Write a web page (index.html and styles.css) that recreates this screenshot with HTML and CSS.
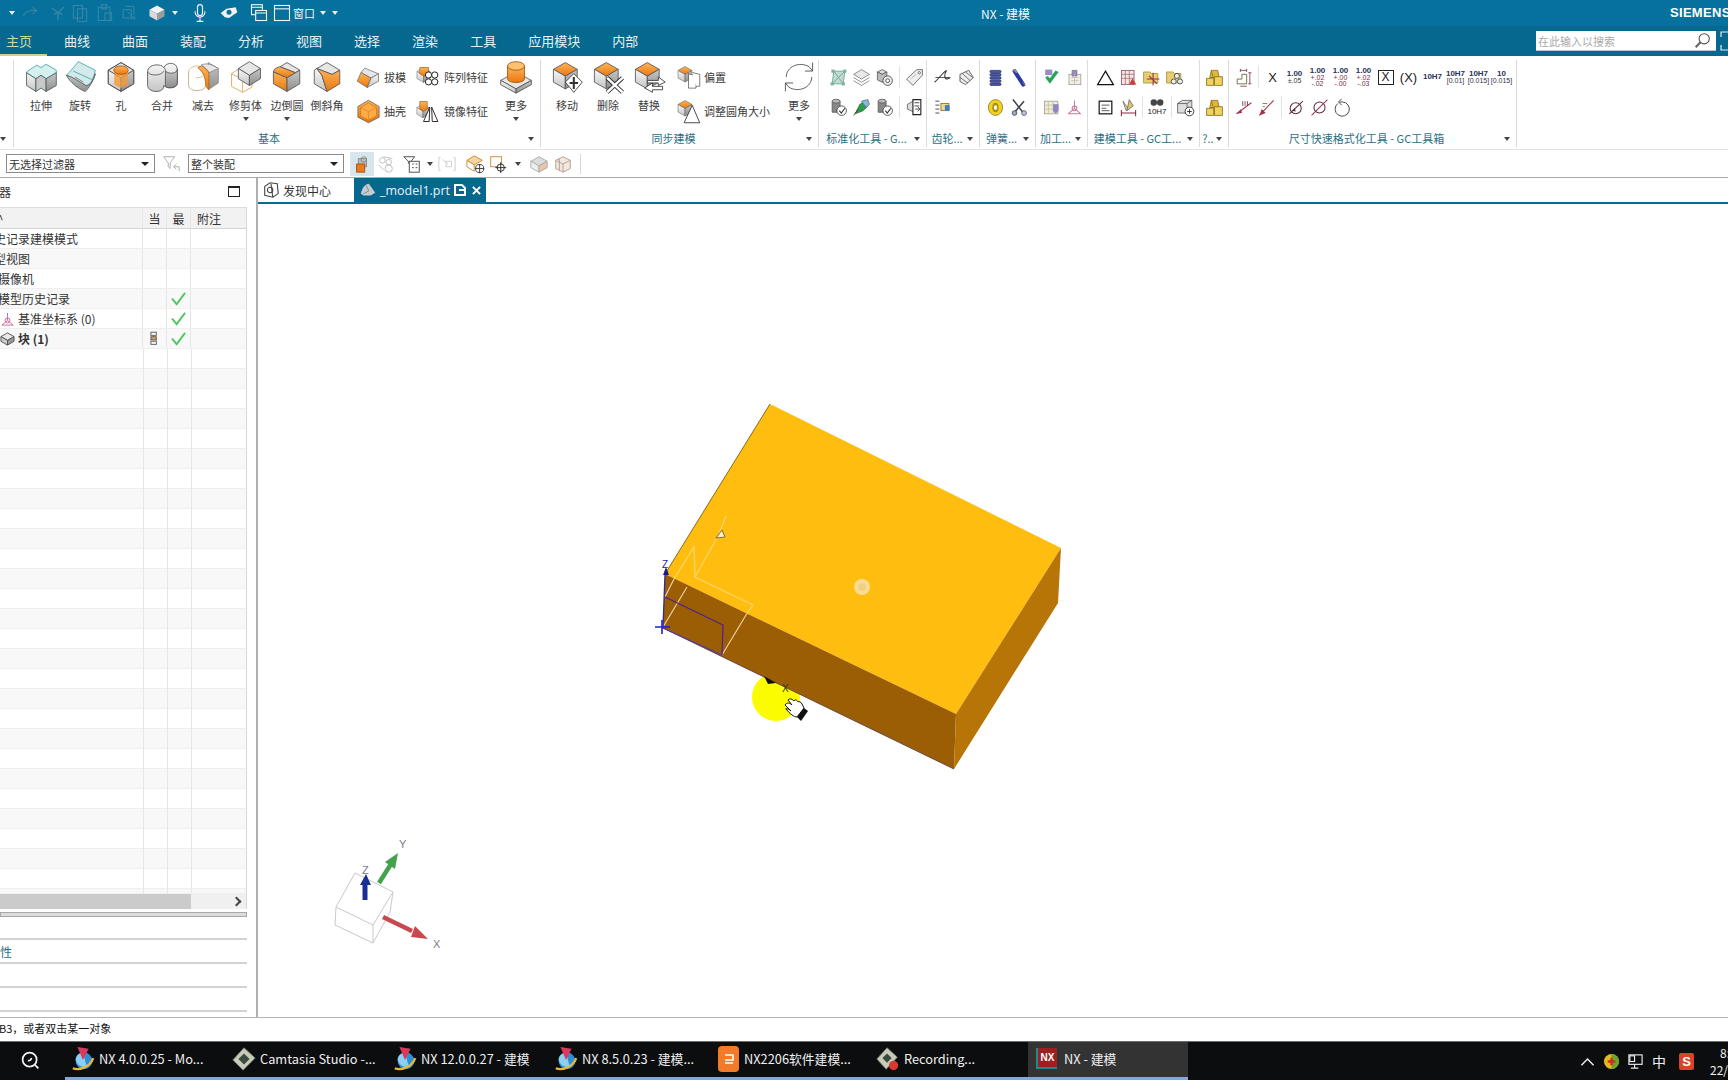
FILE: index.html
```html
<!DOCTYPE html>
<html lang="zh">
<head>
<meta charset="utf-8">
<title>NX - 建模</title>
<link rel="stylesheet" href="styles.css">
</head>
<body>
<svg class="defs" aria-hidden="true">
<defs>
<linearGradient id="o" x1="0" y1="0" x2="0" y2="1"><stop offset="0" stop-color="#ffb45a"/><stop offset="1" stop-color="#e8780f"/></linearGradient>
<linearGradient id="l" x1="0" y1="0" x2="0" y2="1"><stop offset="0" stop-color="#f7f7f7"/><stop offset="1" stop-color="#c4c4c4"/></linearGradient>
<linearGradient id="r" x1="0" y1="0" x2="0" y2="1"><stop offset="0" stop-color="#c8c8c8"/><stop offset="1" stop-color="#8e8e8e"/></linearGradient>
<symbol id="cube" viewBox="0 0 40 40"><g stroke="#555" stroke-linejoin="round"><path d="M20 3 35 12 20 21 5 12z" fill="#e6e6e6"/><path d="M5 12 20 21V37L5 28z" fill="url(#l)"/><path d="M35 12 20 21V37L35 28z" fill="url(#r)"/></g></symbol>
<symbol id="ocube" viewBox="0 0 40 40"><g stroke="#555" stroke-linejoin="round"><path d="M18 3 32 11 18 19 4 11z" fill="url(#o)"/><path d="M4 11 18 19V34L4 26z" fill="url(#l)"/><path d="M32 11 18 19V34L32 26z" fill="url(#r)"/></g></symbol>
<symbol id="extrude" viewBox="0 0 40 40"><g stroke="#4a5a5a" stroke-linejoin="round"><path d="M3 14 15 6 20 9 26 5 38 12 38 15 26 22 20 18 14 22 3 15z" fill="#d6f0f0" stroke="#3aa9ad"/><path d="M3 15 14 22V37L3 30z" fill="url(#l)"/><path d="M14 22 20 18 26 22V37L20 33 14 37z" fill="#c9c9c9"/><path d="M26 22 38 15V30L26 37z" fill="url(#r)"/></g></symbol>
<symbol id="revolve" viewBox="0 0 40 40"><g stroke="#4d5a5d" stroke-linejoin="round"><path d="M4 18C10 20 18 26 26 35 32 30 36 22 38 12L18 2C14 7 8 14 4 18z" fill="#d4eaea" stroke="#3aa9ad"/><path d="M4 18C8 26 18 34 26 37 30 34 35 26 38 16 37 22 32 30 27 30 20 26 12 20 4 18z" fill="url(#r)"/><path d="M12 13 34 23" stroke="#3aa9ad" fill="none"/><path d="M14 20 24 26" stroke="#777" fill="none"/></g></symbol>
<symbol id="hole" viewBox="0 0 40 40"><use href="#cube"/><path d="M12 12V29L20 33 28 29V12z" fill="#f09a3a" opacity=".8"/><ellipse cx="20" cy="12" rx="8.500" ry="5" fill="url(#o)" stroke="#a15a10"/><path d="M20 3 35 12V28L20 37 5 28V12z" fill="none" stroke="#555"/></symbol>
<symbol id="unite" viewBox="0 0 40 40"><g stroke="#555"><path d="M3 14C3 4 20 4 22 9 26 1 38 3 38 11V27C38 34 26 34 22 30V32C20 40 3 38 3 30z" fill="url(#l)"/><path d="M24 13C28 17 38 16 38 11V27C38 33 26 34 24 31z" fill="url(#r)"/><path d="M22 9C24 10 24 12 24 13M3 14C5 19 20 19 22 13" fill="none"/></g></symbol>
<symbol id="subtract" viewBox="0 0 40 40"><g stroke="#888"><ellipse cx="13" cy="14" rx="10" ry="7" fill="#fff" stroke="#d8b48a"/><path d="M3 14V30C3 38 23 38 23 30" fill="#fff" stroke="#c8a478"/><path d="M26 3 38 10V27L26 35V16z" fill="url(#r)"/><path d="M18 6C24 3 30 5 38 10L27 15C26 12 22 8 18 6z" fill="#e8e8e8"/><path d="M18 7C24 10 27 14 27 17V35C25 33 23 31 23 28 23 20 20 14 14 9z" fill="url(#o)" stroke="#b36410"/></g></symbol>
<symbol id="trim" viewBox="0 0 40 40"><g fill="none" stroke="#e0a050"><path d="M3 16 14 9 27 17 27 32 16 38 3 31z" fill="#fff"/><path d="M3 16 16 23 27 17M16 23V38"/></g><g stroke="#555"><path d="M24 2 37 10 24 18 11 10z" fill="#e6e6e6"/><path d="M11 10 24 18V30L11 22z" fill="url(#l)"/><path d="M37 10 24 18V30L37 22z" fill="url(#r)"/></g></symbol>
<symbol id="blend" viewBox="0 0 40 40"><g stroke="#555" stroke-linejoin="round"><path d="M20 3 35 12 30 15 12 8z" fill="#e6e6e6"/><path d="M12 8 30 15 20 21 4 14C4 11 9 8 12 8z" fill="url(#o)"/><path d="M4 14 20 21V37L4 28z" fill="url(#o)"/><path d="M35 12 20 21V37L35 28z" fill="url(#r)"/></g></symbol>
<symbol id="chamfer" viewBox="0 0 40 40"><g stroke="#555" stroke-linejoin="round"><path d="M20 3 35 12 26 17 8 10z" fill="#e6e6e6"/><path d="M5 12 8 10 14 18 20 37 5 28z" fill="url(#l)"/><path d="M8 10 26 17 35 12V28L20 37 14 18z" fill="url(#o)"/></g></symbol>
<symbol id="draft" viewBox="0 0 40 40"><g stroke="#555" stroke-linejoin="round"><path d="M14 5 36 14 24 21 8 12z" fill="#e6e6e6"/><path d="M8 12 24 21 18 36 2 26z" fill="url(#o)"/><path d="M36 14 24 21 18 36 36 26z" fill="url(#l)"/></g></symbol>
<symbol id="shell" viewBox="0 0 40 40"><g stroke="#444"><path d="M20 2 37 12V29L20 38 3 29V12z" fill="url(#o)"/><path d="M20 6 33 14V27L20 34 7 27V14z" fill="#ffab45" stroke="#b56a1c"/><path d="M7 14 20 20 33 14M20 20V34" stroke="#d0801f" fill="none"/></g></symbol>
<symbol id="pattern" viewBox="0 0 40 40"><use href="#cube" x="-2" y="2" width="28" height="28"/><path d="M6 4h14v10l-7 4-7-4z" fill="url(#o)" stroke="#9a5a12"/><g fill="#fff" stroke="#222" stroke-width="1.600"><circle cx="20" cy="16" r="5"/><circle cx="30" cy="16" r="5"/><circle cx="20" cy="27" r="5"/><circle cx="30" cy="27" r="5"/></g></symbol>
<symbol id="mirror" viewBox="0 0 40 40"><use href="#cube" x="-2" y="6" width="26" height="26"/><path d="M6 4h12v12l-6 4-6-4z" fill="url(#o)" stroke="#9a5a12"/><g fill="#fff" stroke="#222" stroke-width="1.500"><path d="M22 13 12 36H21z"/><path d="M25 13 35 36H26z"/></g></symbol>
<symbol id="boss" viewBox="0 0 40 40"><path d="M20 14 38 24 20 34 2 24z" fill="#e6e6e6" stroke="#555"/><path d="M2 24 20 34V39L2 29z" fill="url(#l)" stroke="#555"/><path d="M38 24 20 34V39L38 29z" fill="url(#r)" stroke="#555"/><path d="M10 7V22C10 28 30 28 30 22V7z" fill="url(#o)" stroke="#9a5a12"/><ellipse cx="20" cy="7" rx="10" ry="5" fill="#ffc070" stroke="#9a5a12"/></symbol>
<symbol id="move" viewBox="0 0 40 40"><use href="#ocube"/><path d="M28 16 38 26 28 38 18 26z" fill="#fff" stroke="#333"/><path d="M28 20V34M23 27H33" stroke="#333" stroke-width="2.400"/></symbol>
<symbol id="del" viewBox="0 0 40 40"><use href="#ocube"/><path d="M19 21 37 38M37 21 19 38" stroke="#222" stroke-width="5"/><path d="M19 21 37 38M37 21 19 38" stroke="#fff" stroke-width="3"/></symbol>
<symbol id="replace" viewBox="0 0 40 40"><use href="#ocube"/><path d="M18 24H31V20L39 26 31 30V27H18zM36 31H24V27L15 33 24 38V35H36z" fill="#fff" stroke="#333"/></symbol>
<symbol id="offset" viewBox="0 0 40 40"><use href="#ocube" width="32" height="32"/><path d="M20 14 32 17V37H20z" fill="#fff" stroke="#333"/><path d="M26 12 38 15V34H32" fill="#fff" stroke="#333"/></symbol>
<symbol id="resize" viewBox="0 0 40 40"><use href="#ocube" width="32" height="32"/><path d="M26 10 38 38H13z" fill="#fff" stroke="#333" stroke-width="1.400"/></symbol>
<symbol id="refresh" viewBox="0 0 40 40"><g fill="none" stroke="#444"><path d="M5 20C5 8 20 1 32 8l4 5V3M35 20C35 32 20 39 8 32l-4-5V37M36 13H27M4 27H13"/></g></symbol>
<symbol id="layers" viewBox="0 0 24 24"><g fill="#e8e8e8" stroke="#777"><path d="M12 2 22 8 12 14 2 8z"/><path d="M2 12 12 18 22 12" fill="none"/><path d="M2 16 12 22 22 16" fill="none"/></g></symbol>
<symbol id="tag" viewBox="0 0 24 24"><path d="M15 2H22V9L10 22 2 14z" fill="#eee" stroke="#555"/><circle cx="18" cy="6" r="1.500" fill="#fff" stroke="#555"/><path d="M8 13 14 8" stroke="#a8a8a8"/></symbol>
<symbol id="frame" viewBox="0 0 24 24"><path d="M6 4H20L18 20H4z" fill="#bdddd2" stroke="#5a9d8d"/><path d="M6 4 18 20M20 4 4 20" stroke="#7a8d87"/><g fill="#7ab2a2"><rect x="3" y="2" width="4" height="4"/><rect x="18" y="2" width="4" height="4"/><rect x="2" y="18" width="4" height="4"/><rect x="16" y="18" width="4" height="4"/></g></symbol>
<symbol id="gears" viewBox="0 0 24 24"><g stroke="#555"><path d="M3 5 9 2 15 5 9 8z" fill="#ddd"/><path d="M3 5V15L9 18 15 15V5L9 8z" fill="#bbb"/></g><circle cx="16" cy="16" r="6" fill="#eee" stroke="#333"/><circle cx="16" cy="16" r="2.400" fill="#fff" stroke="#333"/></symbol>
<symbol id="checkcyl" viewBox="0 0 24 24"><path d="M4 4H14V18H4z" fill="#888" stroke="#555"/><ellipse cx="9" cy="4" rx="5" ry="2.400" fill="#bbb" stroke="#555"/><circle cx="16" cy="16" r="6" fill="#fff" stroke="#333"/><path d="M13 16 15.500 19 20 13" fill="none" stroke="#333" stroke-width="1.400"/></symbol>
<symbol id="brush" viewBox="0 0 24 24"><path d="M4 20 10 8 16 4 20 10 14 16z" fill="#2e9e4b" stroke="#1f6b33"/><path d="M12 4 20 2 22 8 18 12z" fill="#8fb8d8" stroke="#4a7290"/><path d="M2 22 8 14" stroke="#333"/></symbol>
<symbol id="docs" viewBox="0 0 24 24"><path d="M3 8 12 3V18L3 14z" fill="#ddd" stroke="#555"/><path d="M10 2H20V21H10z" fill="#fff" stroke="#222" stroke-width="1.400"/><path d="M12 6H18M12 10H18M13 14 18 14M16 11 19 14 16 17" fill="none" stroke="#222"/></symbol>
<symbol id="curve" viewBox="0 0 24 24"><path d="M2 18C7 14 12 6 17 3 14 8 14 14 18 14L22 12" fill="none" stroke="#333" stroke-width="1.300"/><path d="M3 12H21" stroke="#333"/></symbol>
<symbol id="cone" viewBox="0 0 24 24"><path d="M5 8 16 3 22 12 12 21 5 17z" fill="#eee" stroke="#444"/><path d="M8 7 18 16M5 12 15 19M12 5 21 12" stroke="#555"/></symbol>
<symbol id="gearlist" viewBox="0 0 24 24"><path d="M3 4H8M3 9H8M3 14H8M3 19H8" stroke="#222"/><rect x="10" y="7" width="10" height="9" fill="#f4d890" stroke="#7a6a20"/><rect x="15" y="9" width="6" height="7" fill="#3f7fbf"/></symbol>
<symbol id="coil" viewBox="0 0 24 24"><g fill="#4a5aa8" stroke="#2a3470"><rect x="5" y="3" width="14" height="3" rx="1.500"/><rect x="5" y="7" width="14" height="3" rx="1.500"/><rect x="5" y="11" width="14" height="3" rx="1.500"/><rect x="5" y="15" width="14" height="3" rx="1.500"/><rect x="5" y="19" width="14" height="3" rx="1.500"/></g></symbol>
<symbol id="spring" viewBox="0 0 24 24"><path d="M7 4 18 21" stroke="#2b3c9e" stroke-width="5" stroke-linecap="round"/><path d="M6 2 10 6" stroke="#999" stroke-width="2"/><path d="M17 18 21 22" stroke="#999"/></symbol>
<symbol id="ring" viewBox="0 0 24 24"><ellipse cx="12" cy="12" rx="9" ry="10" fill="#f2d21f" stroke="#85761a"/><ellipse cx="12" cy="12" rx="4" ry="6" fill="#a5911a"/><ellipse cx="12" cy="12" rx="2" ry="3" fill="#fff"/></symbol>
<symbol id="scissor" viewBox="0 0 24 24"><path d="M5 2 19 20M19 4 7 18" stroke="#445" stroke-width="2"/><circle cx="7" cy="19" r="3" fill="#9ab" stroke="#445"/><circle cx="19" cy="19" r="3" fill="#bcd" stroke="#445"/></symbol>
<symbol id="greencheck" viewBox="0 0 24 24"><path d="M4 2H13V9H4z" fill="#9a8bc8"/><path d="M4 12 10 20 21 5 17 3 10 13 7 10z" fill="#29a55a"/></symbol>
<symbol id="partdoc" viewBox="0 0 24 24"><rect x="5" y="8" width="15" height="13" fill="#f2eee0" stroke="#999"/><path d="M9 3H15V10H9z" fill="#9a8bc8" stroke="#777"/><path d="M8 12H17M8 16H17M12 8V21" stroke="#bbb"/></symbol>
<symbol id="gridpart" viewBox="0 0 24 24"><rect x="3" y="4" width="17" height="16" fill="#f3efc9" stroke="#999"/><path d="M3 9H20M3 14H20M8 4V20M14 4V20" stroke="#bbb"/><path d="M14 8H21V16L17 20 14 16z" fill="#8f84c4"/></symbol>
<symbol id="triad" viewBox="0 0 24 24"><g fill="none" stroke="#c87a9c" stroke-width="1.300"><circle cx="12" cy="13" r="3"/><path d="M12 3V13L4 20M12 13 20 20M4 20H20"/></g></symbol>
<symbol id="tri" viewBox="0 0 24 24"><path d="M12 4 22 21H2z" fill="#fff" stroke="#111" stroke-width="1.500"/></symbol>
<symbol id="table" viewBox="0 0 24 24"><rect x="3" y="3" width="16" height="18" fill="#f7e8d9" stroke="#804c6e"/><path d="M3 8H19M3 13H19M8 3V21M13 3V21" stroke="#a26c8b"/><path d="M13 20 17 13 22 21z" fill="#d63b2f"/></symbol>
<symbol id="folderx" viewBox="0 0 24 24"><path d="M2 5H10L12 7H20V19H2z" fill="#e8cd72" stroke="#a88b2e"/><path d="M6 14H22M14 6V22M9 10 19 20" stroke="#8a3346" stroke-width="1.300"/></symbol>
<symbol id="folderc" viewBox="0 0 24 24"><path d="M2 5H10L12 7H20V19H2z" fill="#e8cd72" stroke="#a88b2e"/><g fill="#f2eee0" stroke="#335"><circle cx="15" cy="10" r="3.200"/><circle cx="11" cy="17" r="3.200"/><circle cx="19" cy="17" r="3.200"/></g></symbol>
<symbol id="note" viewBox="0 0 24 24"><rect x="4" y="4" width="16" height="16" fill="#fff" stroke="#111" stroke-width="1.500"/><path d="M7 9H17M7 13H13M7 16H17" stroke="#333"/></symbol>
<symbol id="dim" viewBox="0 0 24 24"><path d="M5 4 12 14 9 16z" fill="#e8d9a0" stroke="#666"/><path d="M13 2 18 10 10 16z" fill="#dfc36a" stroke="#666"/><path d="M3 15V23M21 15V23M3 19H21" stroke="#8a2a3f" stroke-width="1.300"/></symbol>
<symbol id="boxplus" viewBox="0 0 24 24"><path d="M2 7 8 3H20V15L14 19H2z" fill="#ddd" stroke="#555"/><path d="M2 7H14V19M14 7 20 3" stroke="#555" fill="none"/><circle cx="17" cy="17" r="5.500" fill="#fff" stroke="#111"/><path d="M14 17H20M17 14V20" stroke="#111"/></symbol>
<symbol id="gold" viewBox="0 0 24 24"><path d="M8 3 16 3 18 12H6z" fill="#e0b93a" stroke="#826a13"/><path d="M2 13H11V22H2zM12 11H22V22H12z" fill="#f0d25d" stroke="#826a13"/><path d="M8 3 10 11" stroke="#826a13"/></symbol>
<symbol id="stepdim" viewBox="0 0 24 24"><path d="M4 14H10V8H16V20H4z" fill="#fff" stroke="#553"/><path d="M20 6V20M18 6H22M18 20H22M8 3H16M8 1V5M16 1V5M8 23H16" stroke="#7a2c3c"/></symbol>
<symbol id="dimr" viewBox="0 0 24 24"><path d="M3 20 22 6" stroke="#a3304a" stroke-width="1.300"/><path d="M3 20 9 14 10 19z" fill="#a3304a"/><path d="M11 4V10M14 4V10M17 4V10" stroke="#6a2236"/></symbol>
<symbol id="dimt" viewBox="0 0 24 24"><path d="M3 22 21 3" stroke="#a3304a" stroke-width="1.300"/><path d="M3 22 6 14 11 19z" fill="#a3304a"/><path d="M7 7H13M7 11H10" stroke="#7a5a30"/></symbol>
<symbol id="diamA" viewBox="0 0 24 24"><circle cx="11" cy="13" r="7" fill="none" stroke="#5a2a40" stroke-width="1.300"/><path d="M3 20 20 4" stroke="#5a2a40" stroke-width="1.300"/><path d="M6 16 10 13 11 17z" fill="#5a2a40"/></symbol>
<symbol id="diamB" viewBox="0 0 24 24"><circle cx="12" cy="12" r="7" fill="none" stroke="#5a2a40" stroke-width="1.300"/><path d="M2 22 22 2" stroke="#a3304a" stroke-width="1.300"/></symbol>
<symbol id="undo" viewBox="0 0 24 24"><path d="M6 7A9 9 0 1 0 12 5H8M11 1 7 5 11 9" fill="none" stroke="#444" stroke-width="1.200"/></symbol>
<symbol id="nxold" viewBox="0 0 28 28"><circle cx="15" cy="16" r="9" fill="#2f8ed8"/><path d="M6 14A9 9 0 0 1 14 7L18 22C12 24 7 20 6 14z" fill="#8bd0f2"/><path d="M8 1 20 3 14 15z" fill="#d93a5c"/><path d="M3 24C10 27 22 22 25 13" fill="none" stroke="#e3b93a" stroke-width="2.500"/></symbol>
<symbol id="camt" viewBox="0 0 28 28"><path d="M14 2 26 13 13 26 2 15z" fill="#c7cbb8" stroke="#777"/><path d="M14 8 20 14 14 20 8 14z" fill="#3b4b3d"/></symbol>
<symbol id="camrec" viewBox="0 0 28 28"><path d="M13 2 24 12 12 25 2 14z" fill="#c7cbb8" stroke="#777"/><path d="M13 8 18 13 13 18 8 13z" fill="#3b4b3d"/><circle cx="20" cy="21" r="5" fill="#d8392f"/></symbol>
</defs>
</svg>

<div class="app">
  <header class="qat">
    <span class="caret light"></span>
    <svg class="q w24" viewBox="0 0 24 24"><path d="M4 16C6 9 12 8 20 9M15 5 20 9 15 13" fill="none" stroke="#39819f" stroke-width="1.500"/></svg>
    <svg class="q w24 g4" viewBox="0 0 24 24"><path d="M5 6 12 12 19 5M12 12V21M7 14C9 11 15 11 17 14" fill="none" stroke="#3a88a8" stroke-width="1.500"/></svg>
    <svg class="q w20" viewBox="0 0 24 24"><g fill="none" stroke="#3a88a8" stroke-width="1.200"><rect x="4" y="3" width="11" height="15"/><rect x="9" y="7" width="11" height="15"/></g></svg>
    <svg class="q w24 g3" viewBox="0 0 24 24"><g fill="none" stroke="#3a88a8" stroke-width="1.200"><rect x="4" y="5" width="14" height="16"/><rect x="8" y="2" width="6" height="5"/><rect x="12" y="12" width="8" height="9"/></g></svg>
    <svg class="q w24" viewBox="0 0 24 24"><g fill="none" stroke="#3a88a8" stroke-width="1.200"><path d="M5 8H15V18H5zM8 4H18V14"/><path d="M10 10 19 19M15 19H19V15"/></g></svg>
    <svg class="q w24 g4" viewBox="0 0 24 24"><path d="M12 3 21 8 12 13 3 8z" fill="#f2f2f2"/><path d="M3 8 12 13V21L3 16z" fill="#d9d9d9"/><path d="M21 8 12 13V21L21 16z" fill="#9c9c9c"/></svg>
    <span class="caret light"></span>
    <svg class="q w24 g7" viewBox="0 0 24 24"><g fill="none" stroke="#eef" stroke-width="1.400"><rect x="9" y="2" width="6" height="13" rx="3"/><path d="M6 10C6 19 18 19 18 10M12 17V22M8 22H16"/></g></svg>
    <svg class="q w24 g5" viewBox="0 0 24 24"><path d="M2 12 9 7 20 5 22 11 12 18 7 17z" fill="#f2f2f2"/><circle cx="12" cy="11" r="3" fill="#07709c"/></svg>
    <svg class="q w24 g6" viewBox="0 0 24 24"><g fill="none" stroke="#f2f7fa" stroke-width="1.300"><rect x="3" y="2" width="13" height="12"/><rect x="8" y="9" width="13" height="12" fill="#07709c"/><path d="M3 5H16M8 12H21"/></g></svg>
    <svg class="q w22" viewBox="0 0 24 24"><g fill="none" stroke="#f2f7fa" stroke-width="1.300"><rect x="3" y="3" width="18" height="18"/><path d="M3 7H21"/></g></svg>
    <span class="qtext">窗口</span>
    <span class="caret light g2"></span>
    <span class="caret light"></span>
    <span class="apptitle">NX - 建模</span>
    <span class="brand">SIEMENS</span>
  </header>

  <nav class="tabs">
    <span class="tab on">主页</span><span class="tab">曲线</span><span class="tab">曲面</span><span class="tab">装配</span><span class="tab">分析</span><span class="tab">视图</span><span class="tab">选择</span><span class="tab">渲染</span><span class="tab">工具</span><span class="tab">应用模块</span><span class="tab">内部</span>
    <div class="search"><span>在此输入以搜索</span>
      <svg class="mag" viewBox="0 0 20 20"><circle cx="12" cy="8" r="6" fill="#fff" stroke="#555" stroke-width="1.300"/><path d="M7.500 12 2 18" stroke="#666" stroke-width="2.500"/></svg>
    </div>
    <svg class="expand" viewBox="0 0 12 20"><path d="M11 1H2V6M2 14V19H11" fill="none" stroke="#dfeaf0" stroke-width="1.200"/></svg>
  </nav>

  <section class="ribbon">
    <div class="g g-cut"><div class="gbody"></div><div class="glabel"><span class="caret"></span></div></div>

    <div class="g g-basic">
      <div class="gbody pl8">
        <div class="big w38"><svg><use href="#extrude"/></svg><span>拉伸</span></div>
        <div class="big w40"><svg><use href="#revolve"/></svg><span>旋转</span></div>
        <div class="big w42"><svg><use href="#hole"/></svg><span>孔</span></div>
        <div class="big w40"><svg><use href="#unite"/></svg><span>合并</span></div>
        <div class="big w42"><svg><use href="#subtract"/></svg><span>减去</span></div>
        <div class="big w43"><svg><use href="#trim"/></svg><span>修剪体</span><i class="caret"></i></div>
        <div class="big w40"><svg><use href="#blend"/></svg><span>边倒圆</span><i class="caret"></i></div>
        <div class="big w40"><svg><use href="#chamfer"/></svg><span>倒斜角</span></div>
        <div class="stack ml9">
          <div class="item"><svg><use href="#draft"/></svg><span>拔模</span></div>
          <div class="item"><svg><use href="#shell"/></svg><span>抽壳</span></div>
        </div>
        <div class="stack ml10 wide">
          <div class="item"><svg><use href="#pattern"/></svg><span>阵列特征</span></div>
          <div class="item"><svg><use href="#mirror"/></svg><span>镜像特征</span></div>
        </div>
        <div class="big w40 ml10"><svg><use href="#boss"/></svg><span>更多</span><i class="caret"></i></div>
      </div>
      <div class="glabel"><b>基本</b><span class="caret"></span></div>
    </div>

    <div class="g g-sync">
      <div class="gbody pl6">
        <div class="big w40"><svg><use href="#move"/></svg><span>移动</span></div>
        <div class="big w40 ml1"><svg><use href="#del"/></svg><span>删除</span></div>
        <div class="big w40 ml1"><svg><use href="#replace"/></svg><span>替换</span></div>
        <div class="stack ml7">
          <div class="item"><svg><use href="#offset"/></svg><span>偏置</span></div>
          <div class="item"><svg><use href="#resize"/></svg><span>调整圆角大小</span></div>
        </div>
        <div class="big w40 ml9"><svg><use href="#refresh"/></svg><span>更多</span><i class="caret"></i></div>
      </div>
      <div class="glabel"><b>同步建模</b><span class="caret"></span></div>
    </div>

    <div class="g g-std">
      <div class="gbody col pl8">
        <div class="row"><svg class="s"><use href="#frame"/></svg><svg class="s"><use href="#layers"/></svg><svg class="s"><use href="#gears"/></svg><span class="sep"></span><svg class="s"><use href="#tag"/></svg></div>
        <div class="row"><svg class="s"><use href="#checkcyl"/></svg><svg class="s"><use href="#brush"/></svg><svg class="s"><use href="#checkcyl"/></svg><span class="sep"></span><svg class="s"><use href="#docs"/></svg></div>
      </div>
      <div class="glabel"><b>标准化工具 - G...</b><span class="caret"></span></div>
    </div>

    <div class="g g-gear">
      <div class="gbody col pl4">
        <div class="row"><svg class="s"><use href="#curve"/></svg><svg class="s"><use href="#cone"/></svg></div>
        <div class="row"><svg class="s"><use href="#gearlist"/></svg></div>
      </div>
      <div class="glabel"><b>齿轮...</b><span class="caret"></span></div>
    </div>

    <div class="g g-spring">
      <div class="gbody col pl4">
        <div class="row"><svg class="s"><use href="#coil"/></svg><svg class="s"><use href="#spring"/></svg></div>
        <div class="row"><svg class="s"><use href="#ring"/></svg><svg class="s"><use href="#scissor"/></svg></div>
      </div>
      <div class="glabel"><b>弹簧...</b><span class="caret"></span></div>
    </div>

    <div class="g g-mach">
      <div class="gbody col pl4">
        <div class="row"><svg class="s"><use href="#greencheck"/></svg><svg class="s"><use href="#partdoc"/></svg></div>
        <div class="row"><svg class="s"><use href="#gridpart"/></svg><svg class="s"><use href="#triad"/></svg></div>
      </div>
      <div class="glabel"><b>加工...</b><span class="caret"></span></div>
    </div>

    <div class="g g-model">
      <div class="gbody col pl6">
        <div class="row"><svg class="s"><use href="#tri"/></svg><svg class="s"><use href="#table"/></svg><svg class="s"><use href="#folderx"/></svg><svg class="s"><use href="#folderc"/></svg></div>
        <div class="row"><svg class="s"><use href="#note"/></svg><svg class="s"><use href="#dim"/></svg><span class="sep sep-t"></span><span class="fit"><svg class="bino" viewBox="0 0 20 10"><circle cx="6" cy="5" r="4" fill="#444"/><circle cx="14" cy="5" r="4" fill="#444"/></svg>10H7</span><span class="sep sep-t"></span><svg class="s"><use href="#boxplus"/></svg></div>
      </div>
      <div class="glabel"><b>建模工具 - GC工...</b><span class="caret"></span></div>
    </div>

    <div class="g g-q">
      <div class="gbody col pl3">
        <div class="row"><svg class="s"><use href="#gold"/></svg></div>
        <div class="row"><svg class="s"><use href="#gold"/></svg></div>
      </div>
      <div class="glabel"><b>?..</b><span class="caret"></span></div>
    </div>

    <div class="g g-dim">
      <div class="gbody col pl3">
        <div class="row"><svg class="s"><use href="#stepdim"/></svg><span class="sep"></span><span class="x">X</span>
          <span class="tol"><em>1.00</em><em class="sm">±.05</em></span>
          <span class="tol"><em>1.00</em><em class="sm red">+.02<br>-.02</em></span>
          <span class="tol"><em>1.00</em><em class="sm red">+.00<br>-.00</em></span>
          <span class="tol"><em>1.00</em><em class="sm red">+.02<br>-.03</em></span>
          <span class="x boxed"><u>X</u></span><span class="x paren">(X)</span>
          <span class="tol one"><em>10H7</em></span>
          <span class="tol"><em>10H7</em><em class="sm">[0.01]</em></span>
          <span class="tol"><em>10H7</em><em class="sm">[0.015]</em></span>
          <span class="tol"><em>10</em><em class="sm">[0.015]</em></span>
        </div>
        <div class="row"><svg class="s"><use href="#dimr"/></svg><svg class="s"><use href="#dimt"/></svg><span class="sep"></span><svg class="s"><use href="#diamA"/></svg><svg class="s"><use href="#diamB"/></svg><svg class="s"><use href="#undo"/></svg></div>
      </div>
      <div class="glabel"><b>尺寸快速格式化工具 - GC工具箱</b><span class="caret"></span></div>
    </div>
  </section>

  <section class="selbar">
    <div class="combo c1"><span>无选择过滤器</span><i class="caret dark"></i></div>
    <svg class="t mlf" viewBox="0 0 22 22"><path d="M3 3H15L10 10V16L8 14V10z" fill="none" stroke="#aaa"/><path d="M14 14 17 11M14 14 17 17M14 14H20V19" fill="none" stroke="#aaa"/></svg>
    <div class="combo c2"><span>整个装配</span><i class="caret dark"></i></div>
    <span class="tbtn"><svg class="t" viewBox="0 0 22 22"><path d="M9 9H18V18H9z" fill="#bbb" stroke="#888" transform="translate(-2 -4)"/><path d="M5 11H14V20H5z" fill="#ee7a20" stroke="#a04f14"/><circle cx="13" cy="6" r="3" fill="none" stroke="#888"/></svg></span>
    <svg class="t ml2" viewBox="0 0 22 22"><g fill="none" stroke="#bbb"><circle cx="7" cy="7" r="3"/><circle cx="14" cy="9" r="3"/><circle cx="14" cy="16" r="4"/><path d="M3 12 9 18M8 3 18 5"/></g></svg>
    <svg class="t ml6" viewBox="0 0 22 22"><g fill="#fff" stroke="#444"><path d="M2 3H14L10 8V12L7 10V8z"/><rect x="8" y="8" width="11" height="12"/></g><path d="M11 11H13M15 11H17M11 15H13M15 15H17" stroke="#444"/></svg>
    <span class="caret sm8"></span>
    <svg class="t ml4" viewBox="0 0 22 22"><g fill="none" stroke="#ccc"><path d="M4 4H2V18H4M18 4H20V18H18"/><path d="M10 8H16V14H10zM6 6 12 11"/></g></svg>
    <svg class="t ml9" viewBox="0 0 22 22"><path d="M9 2 18 7 9 12 1 7z" fill="#f7d5a0" stroke="#c8892f"/><path d="M1 7 9 12V19L1 14z" fill="#fff" stroke="#c8892f"/><circle cx="15" cy="16" r="4.500" fill="#fff" stroke="#333"/><path d="M10 16H20M15 11V21" stroke="#333"/></svg>
    <svg class="t ml2" viewBox="0 0 22 22"><rect x="3" y="3" width="12" height="11" fill="#fff" stroke="#c8892f"/><circle cx="14" cy="15" r="4" fill="#fff" stroke="#222"/><path d="M8 15H20M14 9V21" stroke="#222"/></svg>
    <span class="caret sm8 c2px"></span>
    <svg class="t ml8" viewBox="0 0 22 22"><path d="M11 3 20 8 11 13 2 8z" fill="#ddd" stroke="#aaa"/><path d="M2 8 11 13V20L2 15z" fill="#eee" stroke="#aaa"/><path d="M20 8 11 13V20L20 15z" fill="#e9c6a6" stroke="#aaa"/></svg>
    <svg class="t ml4" viewBox="0 0 22 22"><g fill="#f2e8de" stroke="#b39b8f"><path d="M11 3 19 7V16L11 20 3 16V7z"/><path d="M3 7 11 11 19 7M11 11V20M7 5V18"/></g></svg>
    <span class="vsep"></span>
  </section>

  <main class="main">
    <aside class="panel">
      <div class="phead"><span class="ptitle">部件导航器</span><span class="maxbtn"></span></div>
      <div class="tree">
        <div class="tr th"><span class="c0 in-h">名称 ^</span><span>当</span><span>最</span><span class="note">附注</span></div>
        <div class="tr"><span class="c0 in-a">历史记录建模模式</span><span></span><span></span><span></span></div>
        <div class="tr alt"><span class="c0 in-a">模型视图</span><span></span><span></span><span></span></div>
        <div class="tr"><span class="c0 in-b">摄像机</span><span></span><span></span><span></span></div>
        <div class="tr alt"><span class="c0 in-c">模型历史记录</span><span></span><span class="ok"><svg viewBox="0 0 16 16"><path d="M1 8 6 14 15 2" fill="none" stroke="#4fc55f" stroke-width="2"/></svg></span><span></span></div>
        <div class="tr"><span class="c0 in-d"><svg class="ti" viewBox="0 0 16 16"><g fill="none" stroke="#c76a97"><circle cx="8" cy="10" r="2.500"/><path d="M8 2V10L2 15M8 10 14 15M2 15H14"/></g></svg>基准坐标系 (0)</span><span></span><span class="ok"><svg viewBox="0 0 16 16"><path d="M1 8 6 14 15 2" fill="none" stroke="#4fc55f" stroke-width="2"/></svg></span><span></span></div>
        <div class="tr alt bold"><span class="c0 in-d"><svg class="ti" viewBox="0 0 16 16"><path d="M8 2 15 6 8 10 1 6z" fill="#e8e8e8" stroke="#555"/><path d="M1 6 8 10V15L1 11z" fill="#ccc" stroke="#555"/><path d="M15 6 8 10V15L15 11z" fill="#999" stroke="#555"/></svg>块 (1)</span><span class="mini"><svg viewBox="0 0 10 16"><g fill="none" stroke="#555"><rect x="1" y="1" width="6" height="3.500"/><rect x="1" y="6" width="6" height="3.500" fill="#d9a05a"/><rect x="1" y="11" width="6" height="3.500"/></g></svg></span><span class="ok"><svg viewBox="0 0 16 16"><path d="M1 8 6 14 15 2" fill="none" stroke="#4fc55f" stroke-width="2"/></svg></span><span></span></div>
        <div class="fill"></div>
        <div class="hscroll"><span class="thumb"></span><span class="chev"></span></div>
      </div>
      <div class="sink"></div>
      <div class="sect first"></div>
      <div class="sect"><span class="sect-t">属性</span></div>
      <div class="sect"></div>
      <div class="sect"></div>
    </aside>

    <div class="work">
      <div class="doc-tabs">
        <div class="dt"><svg class="dti" viewBox="0 0 20 20"><g fill="none" stroke="#444" stroke-width="1.200"><path d="M3 6 9 2 17 3 18 14 12 18 3 16z"/><circle cx="9" cy="10" r="3"/><path d="M12 18 10 3"/></g></svg>发现中心</div>
        <div class="dt active"><svg class="dti" viewBox="0 0 20 20"><path d="M2 14C4 6 8 3 11 3L18 13 13 16H5z" fill="#c4ccd0"/><path d="M8 5 11 11 5 14" fill="none" stroke="#7d8a90"/></svg><span class="fname">_model1.prt</span><svg class="pin" viewBox="0 0 12 12"><path d="M1 1H8L11 4V11H1z" fill="none" stroke="#fff" stroke-width="2"/><path d="M5 6H11" stroke="#fff" stroke-width="2"/></svg><svg class="close" viewBox="0 0 10 10"><path d="M1 1 9 9M9 1 1 9" stroke="#fff" stroke-width="2.200"/></svg></div>
      </div>
      <div class="view">
        <svg class="scene" viewBox="258 204 1470 813">
          <circle cx="776" cy="697" r="24" fill="#fcfc00"/>
          <path d="M770 404 1061 548 956 714 665 574z" fill="#febd0f"/>
          <path d="M665 574 956 714 954 769 663 628z" fill="#9b5e04"/>
          <path d="M1061 548 1058 603 954 769 956 714z" fill="#b77508"/>
          <path d="M770 404 665 574" stroke="#8a6a20" fill="none"/>
          <path d="M663 628 954 769" stroke="#6a4a40" fill="none"/>
          <g fill="none" stroke="#ffd468" stroke-width="1.300">
            <path d="M674 579 694 547 695 577 753 605 746 615"/>
            <path d="M695 577 718 536"/>
          </g>
          <g fill="none" stroke="#efcf9f" stroke-width="1.200">
            <path d="M663 627 687 587M665 597 674 579M746 615 722 655"/>
          </g>
          <path d="M718 536 726 516" stroke="#f9dd94" fill="none"/>
          <path d="M722 530 716 538 725 537z" fill="#f7f0d0" stroke="#8a6a30"/>
          <circle cx="862" cy="587" r="8" fill="#fadc94"/>
          <circle cx="862" cy="587" r="4" fill="#f4cf84"/>
          <path d="M665 575 663 627" stroke="#322a90" stroke-width="1.300"/>
          <path d="M665 597 723 625 722 655" fill="none" stroke="#4a1f9a" stroke-width="1.200"/>
          <path d="M663 628 722 655" stroke="#5a3aa0" stroke-width="1.200"/>
          <path d="M655 627H670M662 620V634" stroke="#1f1fd8" stroke-width="1.600"/>
          <path d="M666 567 669 575H663z" fill="#1a1a90"/>
          <text class="ax blue" x="662" y="568">Z</text>
          <path d="M764 676 776 683 768 684z" fill="#111"/>
          <text class="ax" x="782" y="692">X</text>
          <path d="M785 705C787 702 790 703 792 705L788 700C790 698 792 699 794 701 795 699 797 700 798 702 799 701 801 702 802 704L804 708 797 717C794 717 790 714 786 709 785 708 789 709 791 711z" fill="#fff" stroke="#111"/>
          <path d="M797 717 804 708 808 711 801 721z" fill="#111"/>
          <g fill="none" stroke="#c9c9c9"><path d="M355 873 393 892 373 925 336 907zM336 907 335 925 373 943 373 925M393 892 390 912 373 943"/></g>
          <path d="M365 900V881" stroke="#1a2f94" stroke-width="5"/>
          <path d="M366 874 371 885H360z" fill="#1a2f94"/>
          <text class="ax gray" x="362" y="874">Z</text>
          <path d="M379 883 391 864" stroke="#44a14c" stroke-width="4.500"/>
          <path d="M398 853 395 869 385 862z" fill="#44a14c"/>
          <text class="ax gray" x="399" y="848">Y</text>
          <path d="M383 917 412 931" stroke="#c8484e" stroke-width="4.500"/>
          <path d="M428 939 411 937 415 926z" fill="#c8484e"/>
          <text class="ax gray" x="433" y="948">X</text>
        </svg>
      </div>
    </div>
  </main>

  <div class="status"><span>MB3，或者双击某一对象</span></div>

  <footer class="taskbar">
    <svg class="tsearch" viewBox="0 0 24 24"><circle cx="11" cy="11" r="8" fill="none" stroke="#f2f2f2" stroke-width="2"/><path d="M9 12A3 3 0 0 0 13 9" fill="none" stroke="#f2f2f2" stroke-width="2"/><path d="M17 17 21 21" stroke="#f2f2f2" stroke-width="2"/></svg>
    <div class="tk"><svg class="tki"><use href="#nxold"/></svg><span>NX 4.0.0.25 - Mo...</span></div>
    <div class="tk"><svg class="tki"><use href="#camt"/></svg><span>Camtasia Studio -...</span></div>
    <div class="tk"><svg class="tki"><use href="#nxold"/></svg><span>NX 12.0.0.27 - 建模</span></div>
    <div class="tk"><svg class="tki"><use href="#nxold"/></svg><span>NX 8.5.0.23 - 建模...</span></div>
    <div class="tk"><span class="ppt"><svg viewBox="0 0 14 14"><path d="M3 3H11V8H3M3 11H11" fill="none" stroke="#fff" stroke-width="1.600"/></svg></span><span>NX2206软件建模...</span></div>
    <div class="tk"><svg class="tki"><use href="#camrec"/></svg><span>Recording...</span></div>
    <div class="tk act"><span class="nx">NX</span><span>NX - 建模</span></div>
    <div class="tray">
      <svg class="tray-i" viewBox="0 0 14 14"><path d="M2 10 7 5 12 10" fill="none" stroke="#eee" stroke-width="1.200"/></svg>
      <svg class="tray-i" viewBox="0 0 18 18"><circle cx="9" cy="9" r="8" fill="#e8b81f"/><path d="M9 1A8 8 0 0 1 9 17z" fill="#6aa62c"/><path d="M9 5V13M5 9H13" stroke="#c7301d" stroke-width="2.500"/></svg>
      <svg class="tray-i" viewBox="0 0 18 18"><g fill="none" stroke="#eee" stroke-width="1.200"><rect x="2" y="2" width="14" height="10"/><rect x="3" y="3" width="5" height="6"/><path d="M8 12V16M4 16H12"/></g></svg>
      <span class="ime">中</span>
      <span class="sogou">S</span>
      <div class="clock"><span>8:51</span><span>22/8/10</span></div>
    </div>
  </footer>
</div>
</body>
</html>
```
FILE: styles.css
```css
* { box-sizing: border-box; }
html, body { margin: 0; height: 100%; overflow: hidden; background: #fff; }
body { font-family: "Noto Sans CJK SC", "Noto Sans", sans-serif; color: #333; font-size: 11px; }
svg { display: block; }
.defs { position: absolute; width: 0; height: 0; }
.app { width: 1728px; height: 1080px; display: flex; flex-direction: column; overflow: hidden; }

/* Title row */
.qat { height: 26px; background: #07719d; display: flex; align-items: center; padding-left: 6px; color: #f1f6f9; flex: none; }
.q { height: 20px; flex: none; }
.w24.q { width: 24px; }
.w22.q { width: 22px; }
.w20.q { width: 20px; }
.g2 { margin-left: 2px; }
.g3 { margin-left: 3px; }
.g4 { margin-left: 4px; }
.g5 { margin-left: 5px; }
.g6 { margin-left: 6px; }
.g7 { margin-left: 7px; }
.qtext { width: 22px; font-size: 11px; }
.caret { display: inline-block; width: 0; height: 0; border-left: 3px solid transparent; border-right: 3px solid transparent; border-top: 4px solid #444; flex: none; }
.caret.light { border-top-color: #e8f1f5; margin: 0 3px; }
.caret.light.g2 { margin-left: 5px; }
.apptitle { margin-left: 640px; font-size: 12px; width: 60px; white-space: nowrap; }
.brand { margin-left: auto; margin-right: -8px; width: 66px; font: bold 13px/26px "Liberation Sans", sans-serif; letter-spacing: .3px; white-space: nowrap; color: #fff; flex: none; }

/* Menu tabs */
.tabs { height: 30px; background: #06688f; display: flex; align-items: center; padding-left: 6px; gap: 32px; flex: none; position: relative; }
.tab { color: #e6f0f4; font-size: 13px; line-height: 30px; }
.tab.on { color: #cfdca0; }
.tab.on::after { content: ""; position: absolute; left: 0; bottom: 0; width: 47px; height: 2px; background: #c9d392; }
.search { position: absolute; left: 1536px; top: 5px; width: 180px; height: 20px; background: #fff; display: flex; align-items: center; justify-content: space-between; color: #aaa; font-size: 11px; padding: 0 5px 0 2px; border-bottom: 1px solid #b9c6cc; }
.mag { width: 17px; height: 17px; }
.expand { position: absolute; right: -3px; top: 5px; width: 12px; height: 20px; }

/* Ribbon */
.ribbon { height: 94px; background: #fff; border-bottom: 1px solid #e2e2e2; display: flex; padding-top: 4px; flex: none; }
.g { height: 87px; display: flex; flex-direction: column; border-right: 1px solid #dcdcdc; flex: none; }
.g-cut { width: 14px; }
.g-basic { width: 527px; }
.g-sync { width: 278px; }
.g-std { width: 108px; }
.g-gear { width: 53px; }
.g-spring { width: 56px; }
.g-mach { width: 52px; }
.g-model { width: 112px; }
.g-q { width: 29px; }
.g-dim { width: 288px; }
.gbody { height: 70px; display: flex; align-items: flex-start; flex: none; }
.gbody.col { flex-direction: column; padding-top: 2px; }
.pl3 { padding-left: 3px; }
.pl4 { padding-left: 4px; }
.pl6 { padding-left: 6px; }
.pl8 { padding-left: 8px; }
.glabel { height: 17px; display: flex; align-items: center; padding-right: 6px; color: #2b7186; font-size: 11px; line-height: 17px; white-space: nowrap; }
.glabel b { flex: 1; font-weight: 400; text-align: center; }
.g-basic .glabel b { padding-right: 4px; }
.g-cut .glabel { justify-content: flex-start; padding: 0; }
.big { display: flex; flex-direction: column; align-items: center; flex: none; font-size: 11px; line-height: 14px; color: #3c3c3c; white-space: nowrap; }
.big svg { width: 34px; height: 34px; margin-bottom: 4px; }
.big .caret { margin-top: 5px; }
.w38 { width: 38px; }
.w40 { width: 40px; }
.w42 { width: 42px; }
.w43 { width: 43px; }
.ml1 { margin-left: 1px; }
.ml2 { margin-left: 2px; }
.ml4 { margin-left: 4px; }
.ml6 { margin-left: 6px; }
.ml7 { margin-left: 7px; }
.ml8 { margin-left: 8px; }
.ml9 { margin-left: 9px; }
.ml10 { margin-left: 10px; }
.stack { flex: none; }
.stack.wide { width: 70px; }
.item { height: 34px; display: flex; align-items: center; gap: 3px; white-space: nowrap; color: #3c3c3c; }
.item svg { width: 25px; height: 25px; flex: none; }
.row { height: 30px; display: flex; align-items: center; white-space: nowrap; }
.s { width: 19px; height: 19px; margin: 0 2px; flex: none; }
.sep { width: 1px; height: 22px; background: #e2e2e2; margin: 0 3px; flex: none; }
.sep-t { margin: 0 2px; }
.fit { width: 24px; font: 8px/9px "Liberation Sans", sans-serif; color: #222; display: flex; flex-direction: column; align-items: center; }
.bino { width: 16px; height: 9px; }
.x { width: 21px; text-align: center; font: 13px "Liberation Sans", sans-serif; color: #222; flex: none; }
.x.paren { width: 25px; }
.boxed u { display: block; width: 16px; height: 15px; margin: 0 auto; border: 1.500px solid #222; text-decoration: none; line-height: 12px; font-size: 12px; }
.tol { width: 23px; display: flex; flex-direction: column; align-items: center; font: 8px/7px "Liberation Sans", sans-serif; color: #2a3158; flex: none; }
.tol em { font-style: normal; font-weight: 700; font-size: 8px; line-height: 8px; }
.tol em.sm { font-weight: 400; font-size: 7px; line-height: 6px; color: #334; text-align: center; }
.tol em.red { color: #7a2c4c; }
.tol.one em { font-size: 8px; }

/* Selection bar */
.selbar { height: 28px; border-bottom: 1px solid #a9a9a9; display: flex; align-items: center; padding-left: 6px; flex: none; }
.combo { height: 19px; border: 1px solid #8a8a8a; display: flex; align-items: center; justify-content: space-between; padding: 0 5px 0 2px; font-size: 11px; color: #333; flex: none; }
.c1 { width: 149px; }
.c2 { width: 156px; }
.caret.dark { border-top-color: #222; border-left-width: 4px; border-right-width: 4px; border-top-width: 4px; }
.t { width: 20px; height: 20px; flex: none; }
.mlf { margin: 0 7px 0 6px; }
.tbtn { margin-left: 6px; width: 24px; height: 24px; background: #d6e6ec; display: flex; align-items: center; justify-content: center; flex: none; }
.caret.sm8 { margin-left: 5px; }
.caret.c2px { margin-left: 7px; }
.vsep { width: 1px; height: 20px; background: #d8d8d8; margin-left: 7px; }

/* Main split */
.main { flex: 1; display: flex; min-height: 0; }
.panel { width: 258px; border-right: 2px solid #b0b0b0; padding-right: 9px; display: flex; flex-direction: column; overflow: hidden; flex: none; }
.phead { height: 29px; display: flex; align-items: center; justify-content: space-between; padding-bottom: 2px; flex: none; }
.ptitle { font-size: 12px; margin-left: -49px; white-space: nowrap; }
.maxbtn { width: 12px; height: 11px; border: 1px solid #222; border-top-width: 2px; margin-right: 7px; flex: none; }
.tree { flex: none; border-right: 1px solid #d8d8d8; border-top: 1px solid #ddd; height: 702px; display: flex; flex-direction: column; width: 247px; }
.tr { display: grid; grid-template-columns: 143px 24px 24px 1fr; height: 20px; flex: none; font-size: 12px; line-height: 19px; color: #333; white-space: nowrap; border-bottom: 1px solid #efefef; }
.tr > span { border-right: 1px solid #e6e6e6; display: flex; align-items: center; min-width: 0; }
.tr > span:not(.c0) { justify-content: center; }
.tr > span:last-child { border-right: none; }
.tr .c0 { overflow: hidden; }
.tr.alt { background: #f8f8f8; }
.tr.bold { font-weight: 700; }
.th { height: 21px; background: #f2f2f2; border-bottom: 1px solid #d5d5d5; font-size: 12px; }
.th .note { justify-content: flex-start !important; padding-left: 6px; }
.in-h { text-indent: -30px; }
.in-a { text-indent: -18px; }
.in-b { text-indent: -2px; }
.in-c { text-indent: -2px; }
.in-d { padding-left: 0; gap: 3px; }
.ti { width: 15px; height: 15px; flex: none; }
.ok svg { width: 15px; height: 15px; }
.mini svg { width: 9px; height: 15px; }
.fill { flex: 1; background-image:
  linear-gradient(90deg, transparent 143px, #e6e6e6 143px, #e6e6e6 144px, transparent 144px, transparent 167px, #e6e6e6 167px, #e6e6e6 168px, transparent 168px, transparent 191px, #e6e6e6 191px, #e6e6e6 192px, transparent 192px),
  repeating-linear-gradient(180deg, #fff 0, #fff 19px, #efefef 19px, #efefef 20px, #f8f8f8 20px, #f8f8f8 39px, #efefef 39px, #efefef 40px); }
.hscroll { height: 16px; background: #f0f0f0; flex: none; display: flex; align-items: center; justify-content: space-between; padding-right: 6px; }
.thumb { width: 191px; height: 15px; background: #cbcbcb; display: block; }
.chev { width: 7px; height: 7px; border-top: 2px solid #444; border-right: 2px solid #444; transform: rotate(45deg); }
.sink { height: 5px; width: 247px; margin-top: 3px; border: 1px solid #a8a8a8; background: #dcdcdc; flex: none; }
.sect { height: 24px; width: 247px; border-bottom: 2px solid #d2d2d2; flex: none; display: flex; align-items: center; font-size: 12px; color: #2b7186; overflow: hidden; white-space: nowrap; }
.sect.first { height: 23px; }
.sect-t { margin-left: -12px; }

.work { flex: 1; display: flex; flex-direction: column; min-width: 0; }
.doc-tabs { height: 26px; border-bottom: 2px solid #086a92; display: flex; flex: none; }
.dt { height: 24px; display: flex; align-items: center; font-size: 12px; color: #333; flex: none; }
.dt:first-child { width: 96px; padding-left: 4px; gap: 3px; }
.dti { width: 18px; height: 18px; flex: none; }
.dt.active { width: 132px; background: #06688f; color: #e9f2f6; padding-left: 5px; }
.fname { margin-left: 3px; width: 72px; font: 12.500px "Open Sans", "Noto Sans", sans-serif; white-space: nowrap; }
.pin { width: 12px; height: 12px; margin-left: 2px; }
.close { width: 9px; height: 9px; margin-left: 6px; }
.view { flex: 1; min-height: 0; background: #fff; }
.scene { width: 1470px; height: 813px; }
.ax { font: 10px "Liberation Sans", sans-serif; fill: #333; }
.ax.blue { fill: #2222aa; }
.ax.gray { fill: #7a7a88; font-size: 11px; }

/* Status */
.status { height: 24px; border-top: 1px solid #b4b4b4; display: flex; align-items: center; padding-bottom: 3px; font-size: 11px; color: #111; flex: none; overflow: hidden; white-space: nowrap; }
.status span { margin-left: -10px; }

/* Taskbar */
.taskbar { height: 39px; background: #0c0d0f; border-top: 1px solid #6d6d6d; display: flex; color: #efefef; font-size: 12px; flex: none; }
.tsearch { width: 21px; height: 21px; margin: 8px 24px 0 20px; flex: none; }
.tk { width: 161px; display: flex; align-items: center; gap: 3px; padding-left: 7px; padding-bottom: 2px; border-bottom: 3px solid #7ea9d9; flex: none; white-space: nowrap; font-size: 12.800px; overflow: hidden; }
.tki { width: 26px; height: 26px; flex: none; margin-left: -2px; }
.ppt { width: 21px; height: 26px; background: #f47a2b; border-radius: 4px; display: flex; align-items: center; justify-content: center; flex: none; margin: 0 2px 0 2px; }
.ppt svg { width: 14px; height: 14px; }
.act { width: 160px; margin-left: -3px; background: #333; padding-left: 8px; gap: 7px; }
.nx { width: 21px; height: 21px; background: #9d1f22; border-left: 2px solid #1f8a8a; border-bottom: 2px solid #1f8a8a; color: #fff; font: bold 10px/19px "Liberation Sans", sans-serif; text-align: center; flex: none; }
.tray { margin-left: auto; display: flex; align-items: center; gap: 7px; padding-left: 10px; width: 159px; flex: none; }
.tray-i { width: 17px; height: 17px; flex: none; }
.ime { font-size: 14px; width: 16px; text-align: center; flex: none; }
.sogou { width: 15px; height: 17px; margin-left: 5px; background: #d8432a; border-radius: 2px; font: bold 13px/17px "Liberation Sans", sans-serif; text-align: center; color: #fff; flex: none; }
.clock { display: flex; flex-direction: column; margin-left: 9px; font-size: 12px; line-height: 17px; white-space: nowrap; flex: none; }
.clock span:first-child { margin-left: 10px; }
```
